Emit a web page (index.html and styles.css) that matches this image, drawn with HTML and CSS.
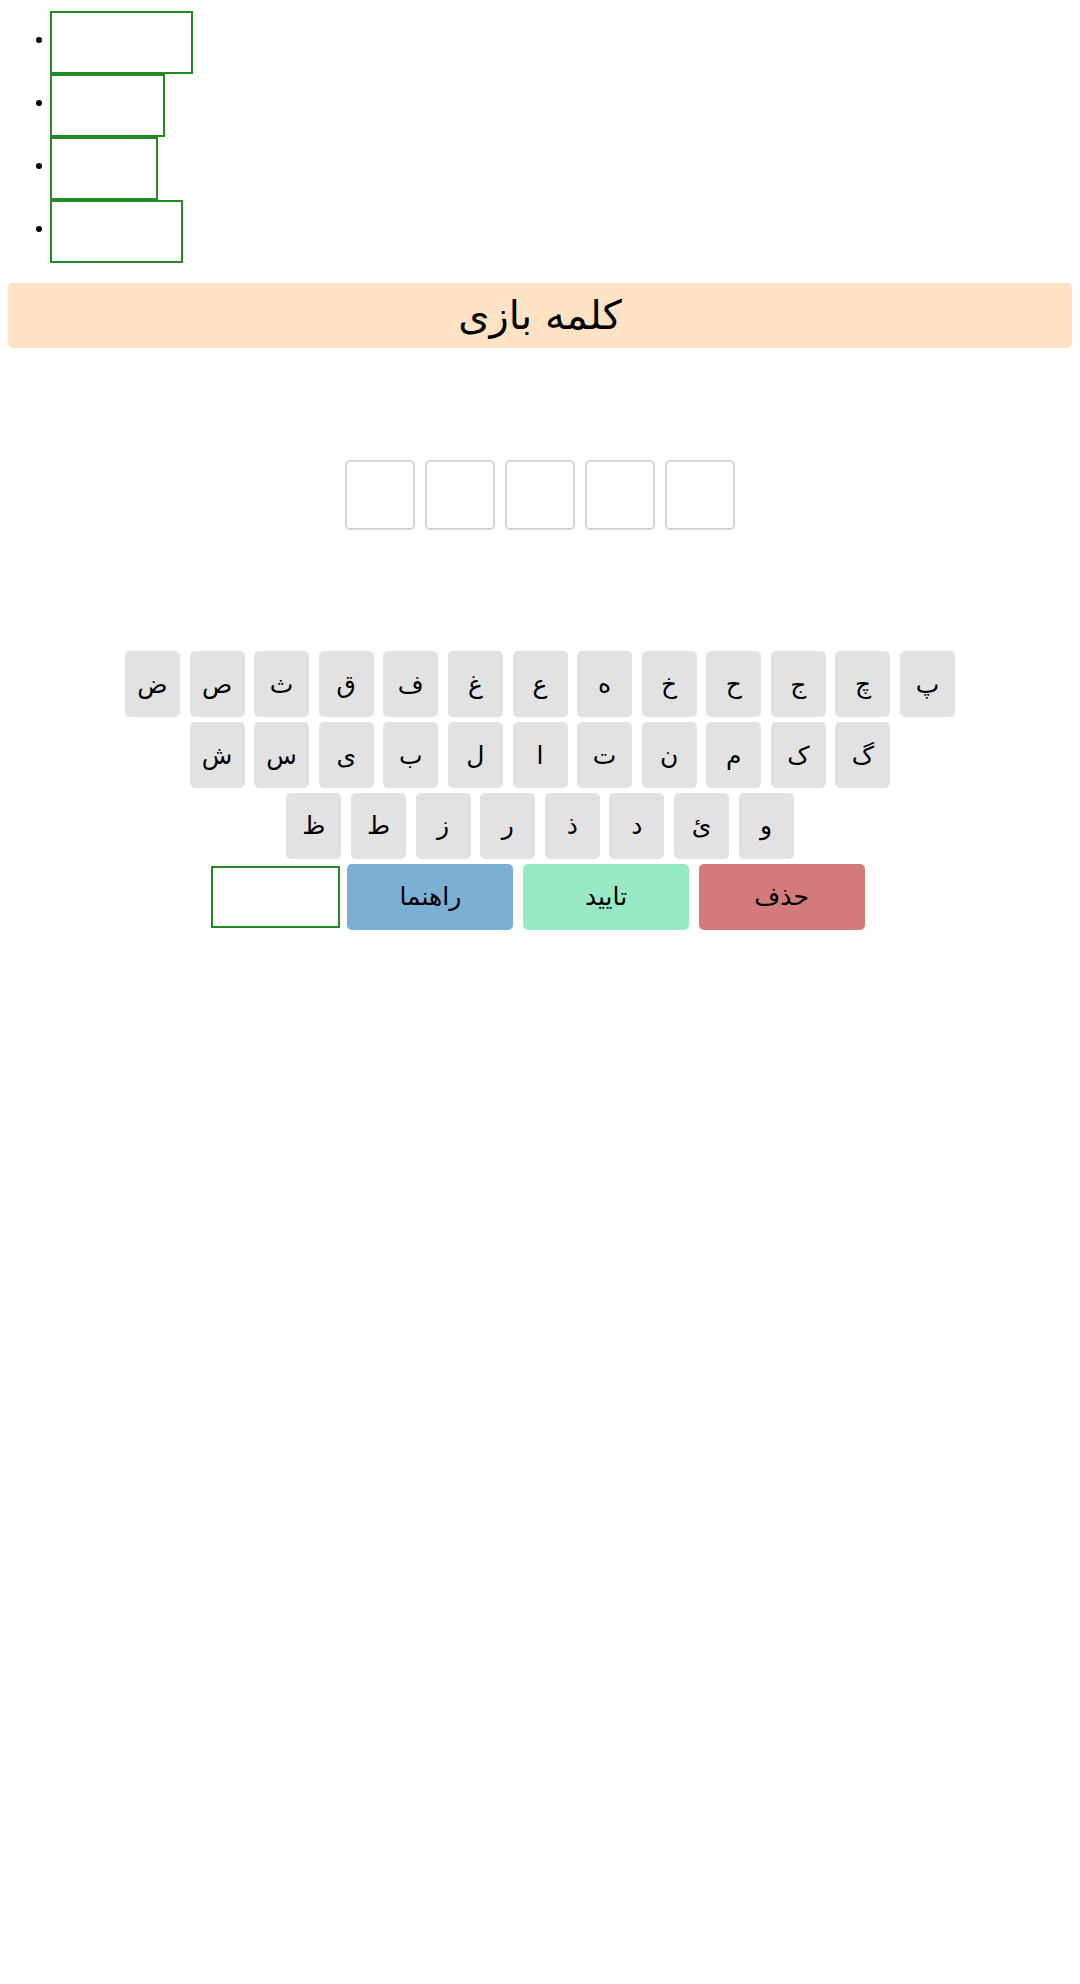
FILE: index.html
```html
<!DOCTYPE html>
<html lang="fa">
<head>
<meta charset="utf-8">
<title>کلمه بازی</title>
<link rel="stylesheet" href="styles.css">
</head>
<body>
<ul class="slots">
  <li><span class="slot slot-a"></span></li>
  <li><span class="slot slot-b"></span></li>
  <li><span class="slot slot-c"></span></li>
  <li><span class="slot slot-d"></span></li>
</ul>
<header class="title">کلمه بازی</header>
<main class="game">
  <div class="board">
    <div class="cell"></div>
    <div class="cell"></div>
    <div class="cell"></div>
    <div class="cell"></div>
    <div class="cell"></div>
  </div>
  <div class="keyboard">
    <div class="krow">
      <button class="key">ض</button><button class="key">ص</button><button class="key">ث</button><button class="key">ق</button><button class="key">ف</button><button class="key">غ</button><button class="key">ع</button><button class="key">ه</button><button class="key">خ</button><button class="key">ح</button><button class="key">ج</button><button class="key">چ</button><button class="key">پ</button>
    </div>
    <div class="krow">
      <button class="key">ش</button><button class="key">س</button><button class="key">ی</button><button class="key">ب</button><button class="key">ل</button><button class="key">ا</button><button class="key">ت</button><button class="key">ن</button><button class="key">م</button><button class="key">ک</button><button class="key">گ</button>
    </div>
    <div class="krow">
      <button class="key">ظ</button><button class="key">ط</button><button class="key">ز</button><button class="key">ر</button><button class="key">ذ</button><button class="key">د</button><button class="key">ئ</button><button class="key">و</button>
    </div>
    <div class="krow">
      <span class="hint-box"></span>
      <button class="key wide help">راهنما</button><button class="key wide ok">تایید</button><button class="key wide del">حذف</button>
    </div>
  </div>
</main>
</body>
</html>
```
FILE: styles.css
```css
html, body {
  background: #ffffff;
}
body {
  margin: 8px;
  font-family: "DejaVu Sans", sans-serif;
  color: #000;
}
.slots {
  list-style: none;
  margin: 3px 0 20px;
  padding-left: 28px;
}
.slots li {
  display: flex;
  align-items: center;
}
.slots li::before {
  content: "";
  width: 6px;
  height: 6px;
  border-radius: 50%;
  background: #000;
  margin-right: 8px;
  margin-bottom: 5px;
}
.slot {
  display: block;
  box-sizing: border-box;
  height: 63px;
  border: 2px solid #238a23;
}
.slot-a { width: 143px; }
.slot-b { width: 115px; }
.slot-c { width: 108px; }
.slot-d { width: 133px; }

.title {
  background: #fde3c4;
  border-radius: 5px;
  text-align: center;
  font-size: 40px;
  line-height: 47px;
  padding: 9px 0;
}
.game {
  display: flex;
  flex-direction: column;
  align-items: center;
}
.board {
  display: flex;
  gap: 10px;
  margin-top: 112px;
}
.cell {
  box-sizing: border-box;
  width: 70px;
  height: 70px;
  border: 2px solid #d6d6d6;
  border-radius: 5px;
}
.keyboard {
  margin-top: 119px;
  display: flex;
  flex-direction: column;
  align-items: center;
}
.krow {
  display: flex;
  align-items: center;
  justify-content: center;
}
.key {
  box-sizing: border-box;
  width: 55px;
  height: 66px;
  margin: 2.4px 4.8px;
  padding: 0;
  border: none;
  border-radius: 5px;
  background: #e2e2e2;
  font-family: "DejaVu Sans", sans-serif;
  font-size: 25px;
  color: #000;
  display: flex;
  align-items: center;
  justify-content: center;
}
.key.wide {
  width: 166px;
}
.help { background: #7cafd4; }
.ok { background: #98eac6; }
.del { background: #d37b7b; }
.hint-box {
  box-sizing: border-box;
  width: 129px;
  height: 62px;
  border: 2px solid #238a23;
  margin-right: 3px;
}
```
